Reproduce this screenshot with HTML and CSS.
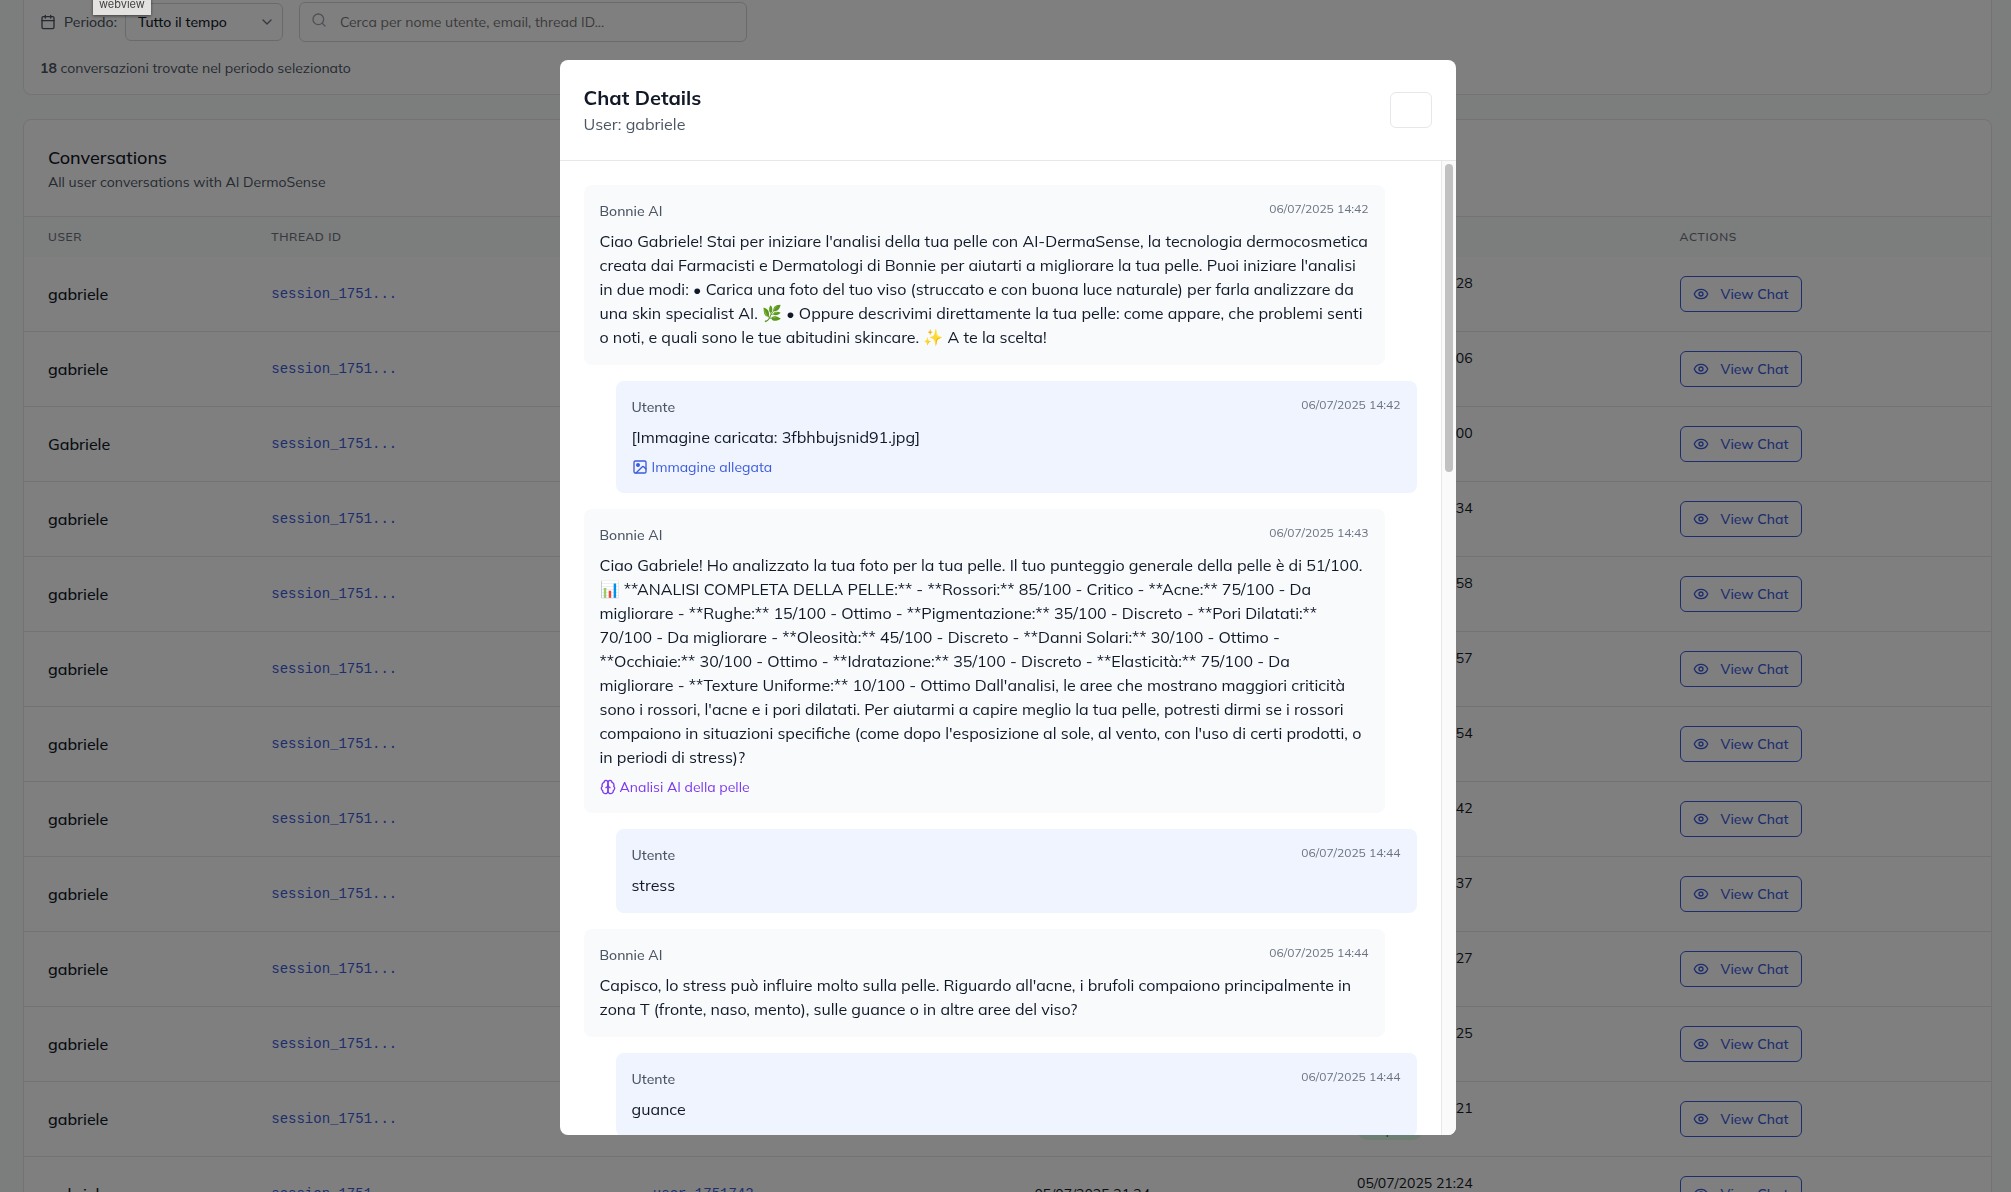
FILE: index.html
```html
<!DOCTYPE html>
<html lang="it">
<head>
<meta charset="utf-8">
<meta name="viewport" content="width=device-width, initial-scale=1">
<title>Conversations</title>
<link rel="stylesheet" href="styles.css">
</head>
<body>
<svg class="sprite" aria-hidden="true">
  <symbol id="eye" viewBox="0 0 24 24"><path d="M2.06 12.35a1 1 0 0 1 0-.7 10.75 10.75 0 0 1 19.88 0 1 1 0 0 1 0 .7 10.75 10.75 0 0 1-19.88 0"/><circle cx="12" cy="12" r="3"/></symbol>
  <symbol id="calendar" viewBox="0 0 24 24"><path d="M8 2v4M16 2v4M3 10h18"/><rect x="3" y="4" width="18" height="18" rx="2"/></symbol>
  <symbol id="search" viewBox="0 0 24 24"><circle cx="11" cy="11" r="8"/><path d="m21 21-4.3-4.3"/></symbol>
  <symbol id="chevron" viewBox="0 0 24 24"><path d="m6 9 6 6 6-6"/></symbol>
  <symbol id="image" viewBox="0 0 24 24"><rect x="3" y="3" width="18" height="18" rx="2"/><circle cx="9" cy="9" r="2" fill="currentColor"/><path d="m21 15-3.09-3.09a2 2 0 0 0-2.82 0L6 21"/></symbol>
  <symbol id="brain" viewBox="0 0 24 24"><path d="M12 5a3 3 0 1 0-5.997.125 4 4 0 0 0-2.526 5.77 4 4 0 0 0 .556 6.588A4 4 0 1 0 12 18Z"/><path d="M12 5a3 3 0 1 1 5.997.125 4 4 0 0 1 2.526 5.77 4 4 0 0 1-.556 6.588A4 4 0 1 1 12 18Z"/><path d="M15 13a4.5 4.5 0 0 1-3-4 4.5 4.5 0 0 1-3 4"/></symbol>
</svg>

<main class="page">
  <section class="card filters">
    <div class="filter-row">
      <div class="period">
        <svg class="icon"><use href="#calendar"/></svg>
        <label for="period">Periodo:</label>
        <span class="select-wrap">
          <select id="period"><option>Tutto il tempo</option></select>
          <svg class="icon"><use href="#chevron"/></svg>
        </span>
      </div>
      <div class="search">
        <svg class="icon"><use href="#search"/></svg>
        <input type="text" aria-label="Cerca" placeholder="Cerca per nome utente, email, thread ID...">
      </div>
    </div>
    <p class="count"><strong>18</strong> conversazioni trovate nel periodo selezionato</p>
  </section>

  <section class="card">
    <header class="card-head">
      <h2>Conversations</h2>
      <p>All user conversations with AI DermoSense</p>
    </header>
    <table>
      <thead>
        <tr><th class="c-user">User</th><th class="c-thread">Thread ID</th><th class="c-uid">User ID</th><th class="c-date">Created</th><th class="c-date">Last Activity</th><th>Actions</th></tr>
      </thead>
      <tbody id="rows"></tbody>
    </table>
  </section>
</main>

<div class="overlay">
  <div class="modal" role="dialog" aria-modal="true" aria-labelledby="dlg-title">
    <header class="modal-head">
      <div>
        <h3 id="dlg-title">Chat Details</h3>
        <p>User: gabriele</p>
      </div>
      <button type="button" class="close" aria-label="Close"></button>
    </header>
    <div class="modal-body">
      <div class="messages">
        <article class="msg bot">
          <header><span class="who">Bonnie AI</span><time>06/07/2025 14:42</time></header>
          <p>Ciao Gabriele! Stai per iniziare l'analisi della tua pelle con AI-DermaSense, la tecnologia dermocosmetica creata dai Farmacisti e Dermatologi di Bonnie per aiutarti a migliorare la tua pelle. Puoi iniziare l'analisi in due modi: • Carica una foto del tuo viso (struccato e con buona luce naturale) per farla analizzare da una skin specialist AI. 🌿 • Oppure descrivimi direttamente la tua pelle: come appare, che problemi senti o noti, e quali sono le tue abitudini skincare. ✨ A te la scelta!</p>
        </article>
        <article class="msg user">
          <header><span class="who">Utente</span><time>06/07/2025 14:42</time></header>
          <p>[Immagine caricata: 3fbhbujsnid91.jpg]</p>
          <div class="tag tag-image"><svg class="icon"><use href="#image"/></svg>Immagine allegata</div>
        </article>
        <article class="msg bot">
          <header><span class="who">Bonnie AI</span><time>06/07/2025 14:43</time></header>
          <p>Ciao Gabriele! Ho analizzato la tua foto per la tua pelle. Il tuo punteggio generale della pelle è di 51/100. 📊 **ANALISI COMPLETA DELLA PELLE:** - **Rossori:** 85/100 - Critico - **Acne:** 75/100 - Da migliorare - **Rughe:** 15/100 - Ottimo - **Pigmentazione:** 35/100 - Discreto - **Pori Dilatati:** 70/100 - Da migliorare - **Oleosità:** 45/100 - Discreto - **Danni Solari:** 30/100 - Ottimo - **Occhiaie:** 30/100 - Ottimo - **Idratazione:** 35/100 - Discreto - **Elasticità:** 75/100 - Da migliorare&nbsp;- **Texture Uniforme:** 10/100 - Ottimo Dall'analisi, le aree che mostrano maggiori criticità sono i rossori, l'acne e i pori dilatati. Per aiutarmi a capire meglio la tua pelle, potresti dirmi se i rossori compaiono in situazioni specifiche (come dopo l'esposizione al sole, al vento, con l'uso di certi prodotti, o in periodi di stress)?</p>
          <div class="tag tag-ai"><svg class="icon"><use href="#brain"/></svg>Analisi AI della pelle</div>
        </article>
        <article class="msg user">
          <header><span class="who">Utente</span><time>06/07/2025 14:44</time></header>
          <p>stress</p>
        </article>
        <article class="msg bot">
          <header><span class="who">Bonnie AI</span><time>06/07/2025 14:44</time></header>
          <p>Capisco, lo stress può influire molto sulla pelle. Riguardo all'acne, i brufoli compaiono principalmente in zona T (fronte, naso, mento), sulle guance o in altre aree del viso?</p>
        </article>
        <article class="msg user">
          <header><span class="who">Utente</span><time>06/07/2025 14:44</time></header>
          <p>guance</p>
        </article>
      </div>
      <div class="rail" aria-hidden="true"><div class="thumb"></div></div>
    </div>
  </div>
</div>

<div class="tooltip" role="tooltip">webview</div>
<script src="rows.js"></script>
</body>
</html>
```
FILE: styles.css
```css
*, *::before, *::after { box-sizing: border-box; }
body, h2, h3, p { margin: 0; }
body {
  height: 100vh;
  overflow: hidden;
  background: #f9fafb;
  color: #111827;
  font: 400 16px/24px Mulish, "Open Sans", sans-serif;
}
button, input, select { font: inherit; color: inherit; }
.sprite { display: none; }
.icon {
  width: 16px;
  height: 16px;
  flex: none;
  fill: none;
  stroke: currentColor;
  stroke-width: 2;
  stroke-linecap: round;
  stroke-linejoin: round;
}

.page { padding: 0 19px 0 23px; }
.card {
  background: #fff;
  border: 1px solid #e5e7eb;
  border-radius: 8px;
}

.filters {
  margin-bottom: 24px;
  padding: 2px 16px 16px;
  border-top: 0;
  border-top-left-radius: 0;
  border-top-right-radius: 0;
  font-size: 14px;
  line-height: 20px;
  color: #4b5563;
}
.filter-row { display: flex; align-items: center; gap: 16px; margin-bottom: 16px; }
.period { display: flex; align-items: center; gap: 8px; font-weight: 500; }
.select-wrap { display: grid; align-items: center; }
.select-wrap > * { grid-area: 1 / 1; }
.select-wrap .icon { justify-self: end; margin-right: 8px; color: #6b7280; pointer-events: none; }
.select-wrap select {
  appearance: none;
  width: 158px;
  height: 38px;
  padding: 0 32px 0 12px;
  border: 1px solid #d1d5db;
  border-radius: 6px;
  background: #fff;
  color: #111827;
}
.search { display: grid; align-items: center; flex: 0 1 448px; }
.search > * { grid-area: 1 / 1; }
.search .icon { z-index: 1; margin: 0 0 4px 12px; color: #9ca3af; }
.search input {
  width: 100%;
  height: 40px;
  padding: 0 12px 0 40px;
  border: 1px solid #d1d5db;
  border-radius: 6px;
  background: #fff;
}
.search input::placeholder { color: #757575; opacity: 1; }
.count strong { font-weight: 700; }

.card-head { padding: 24px; border-bottom: 1px solid #e5e7eb; }
.card-head h2 { font-size: 18px; line-height: 28px; font-weight: 500; }
.card-head p { font-size: 14px; line-height: 20px; color: #4b5563; }

table { width: 100%; table-layout: fixed; border-collapse: separate; border-spacing: 0; }
th {
  padding: 12px 24px;
  background: #f9fafb;
  color: #6b7280;
  font-size: 12px;
  line-height: 16px;
  font-weight: 500;
  letter-spacing: 0.05em;
  text-align: left;
  text-transform: uppercase;
}
.c-user { width: 11.35%; }
.c-thread, .c-uid { width: 19.4%; }
.c-date { width: 16.4%; }
td { height: 75px; padding: 0 24px; border-bottom: 1px solid #e5e7eb; font-size: 14px; line-height: 20px; }
td.name { font-size: 16px; font-weight: 500; }
.mono { color: #3b5bdb; font-family: "SF Mono", "Liberation Mono", monospace; }
.badge {
  display: table;
  margin-top: 2px;
  padding: 2px 14px;
  border-radius: 10px;
  background: #dcfce7;
  color: #166534;
  font-size: 12px;
  line-height: 16px;
}
.view {
  display: inline-flex;
  align-items: center;
  gap: 12px;
  height: 36px;
  padding: 0 12px;
  border: 1px solid #3b5bdb;
  border-radius: 6px;
  background: transparent;
  color: #3b5bdb;
  font-weight: 500;
  white-space: nowrap;
}

.overlay {
  position: fixed;
  inset: 0;
  z-index: 10;
  display: flex;
  align-items: center;
  justify-content: center;
  padding: 3px 0 0 4px;
  background: rgba(0, 0, 0, 0.5);
}
.modal {
  display: flex;
  flex-direction: column;
  width: 100%;
  max-width: 896px;
  max-height: calc(90vh + 2px);
  overflow: hidden;
  border-radius: 8px;
  background: #fff;
}
.modal-head {
  display: flex;
  flex: none;
  align-items: center;
  justify-content: space-between;
  padding: 24px;
  border-bottom: 1px solid #e5e7eb;
}
.modal-head h3 { font-size: 20px; line-height: 28px; font-weight: 700; }
.modal-head p { color: #4b5563; }
.close { width: 42px; height: 36px; border: 1px solid #e5e7eb; border-radius: 6px; background: #fff; }
.modal-body { display: flex; flex: 1; min-height: 0; }
.messages {
  display: flex;
  flex: 1;
  flex-direction: column;
  gap: 16px;
  min-width: 0;
  padding: 24px;
  overflow-y: auto;
  scrollbar-width: none;
}
.msg { flex: none; padding: 16px; border-radius: 8px; }
.bot { margin-right: 32px; background: #f8fafc; }
.user { margin-left: 32px; background: #eff4ff; }
.msg header {
  display: flex;
  align-items: flex-start;
  justify-content: space-between;
  margin-bottom: 8px;
  font-size: 14px;
  line-height: 20px;
}
.who { color: #4b5563; font-weight: 500; }
.msg time { color: #6b7280; font-size: 12px; line-height: 16px; }
.tag { display: flex; align-items: center; gap: 4px; margin-top: 8px; font-size: 14px; line-height: 20px; }
.tag-image { color: #3b5bdb; }
.tag-ai { color: #7c3aed; }

.rail { flex: none; width: 15px; padding: 3px 3px 0; border-left: 1px solid #e8e8e8; background: #fafafa; }
.thumb { width: 8px; height: 31.7%; border-radius: 4px; background: #c1c1c1; }

.tooltip {
  position: fixed;
  top: -6px;
  left: 93px;
  z-index: 11;
  padding: 2px 6px 3px;
  background: #e3e2e0;
  box-shadow: 0 1px 3px rgba(0, 0, 0, 0.5);
  color: #3f3f3f;
  font: 11px/16px Inter, sans-serif;
}
```
FILE: rows.js
```js
const names = ["gabriele", "gabriele", "Gabriele"];
const minutes = ["14:28", "14:06", "14:00", "13:34", "12:58", "12:57", "12:54", "12:42", "12:37", "12:27", "12:25", "12:21", "21:24"];

document.getElementById("rows").innerHTML = minutes.map((time, i) => {
  const day = i === 12 ? "05/07/2025" : "06/07/2025";
  return `<tr>
    <td class="name">${names[i] || "gabriele"}</td>
    <td class="mono">session_1751...</td>
    <td class="mono">user_1751742...</td>
    <td>${day} ${time}</td>
    <td>${day} ${time}<span class="badge">Report</span></td>
    <td><button type="button" class="view"><svg class="icon"><use href="#eye"/></svg>View Chat</button></td>
  </tr>`;
}).join("");
```
